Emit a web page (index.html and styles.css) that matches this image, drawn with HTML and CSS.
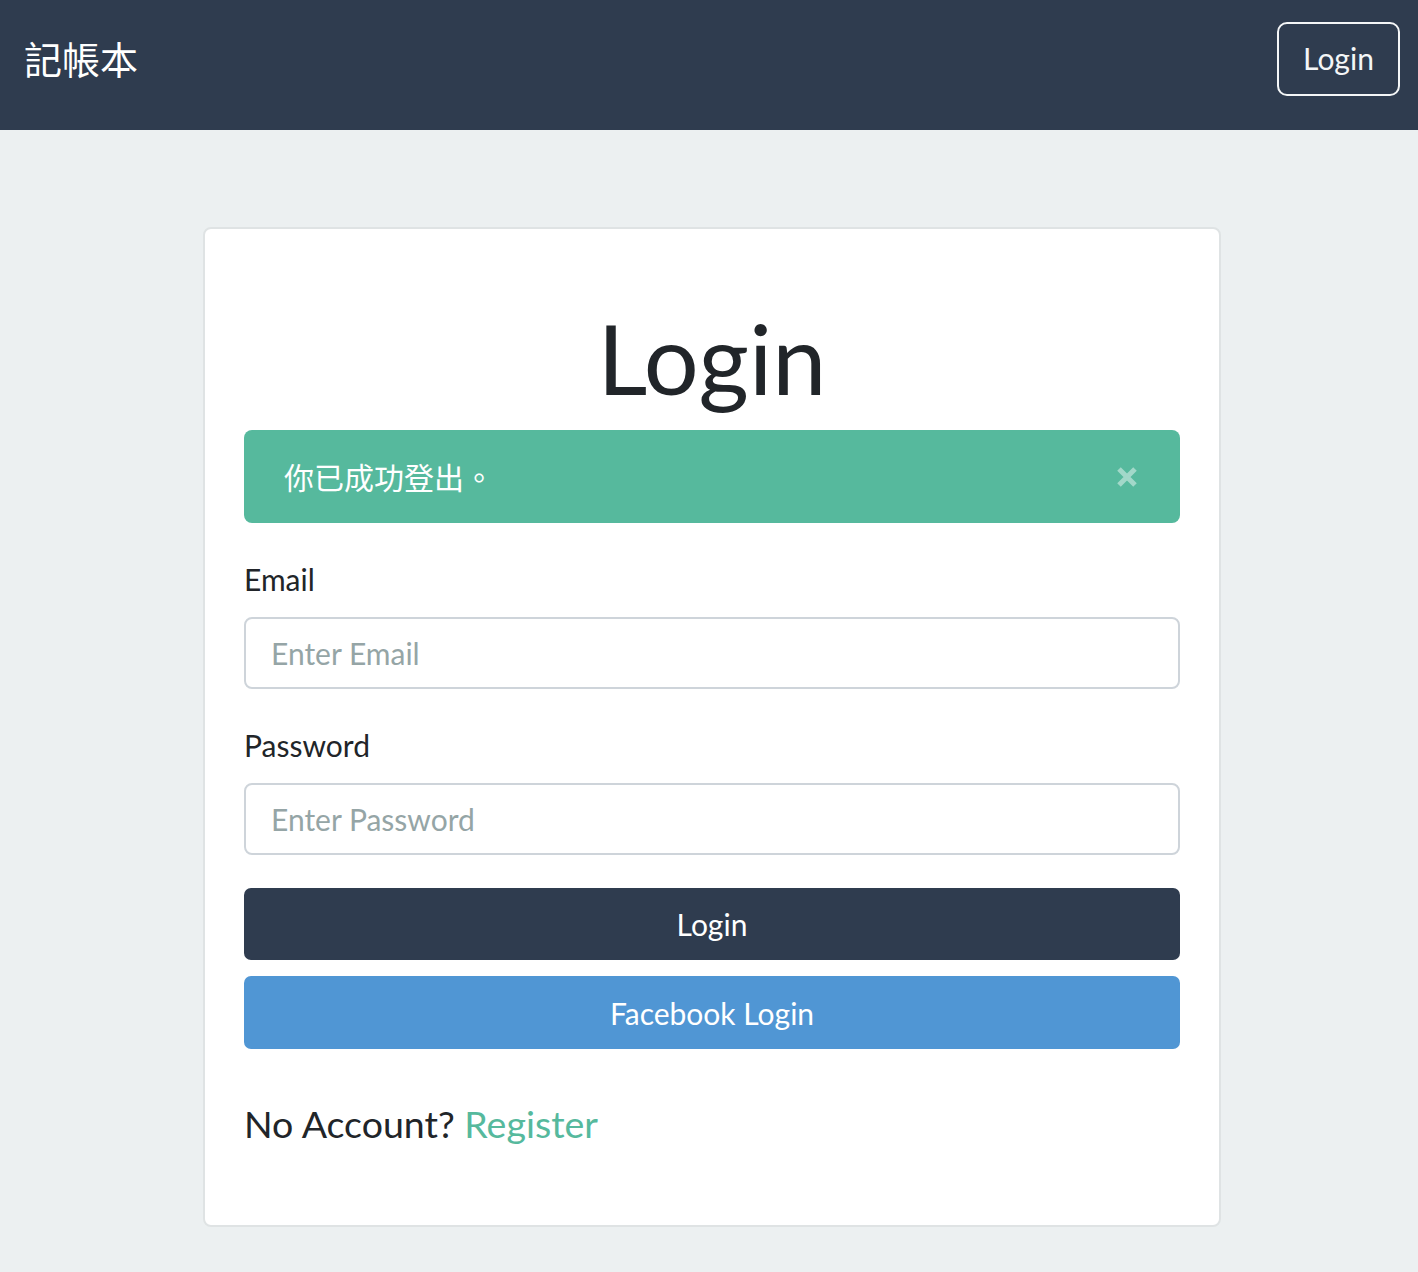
FILE: index.html
```html
<!DOCTYPE html>
<html lang="zh-Hant">
<head>
<meta charset="utf-8">
<title>記帳本</title>
<link rel="stylesheet" href="styles.css">
</head>
<body>
<nav class="navbar">
  <a class="brand" href="#">記帳本</a>
  <a class="nav-btn" href="#">Login</a>
</nav>
<main class="main">
  <section class="card">
    <h1 class="title">Login</h1>
    <div class="alert">
      <span class="alert-text">你已成功登出。</span>
      <button class="alert-close" aria-label="Close">
        <svg width="22" height="22" viewBox="0 0 22 22"><path d="M3 3 L19 19 M19 3 L3 19" stroke="currentColor" stroke-width="5" stroke-linecap="butt"/></svg>
      </button>
    </div>
    <form class="form">
      <label class="label" for="email">Email</label>
      <input class="input" id="email" type="email" placeholder="Enter Email">
      <label class="label" for="password">Password</label>
      <input class="input" id="password" type="password" placeholder="Enter Password">
      <button class="btn btn-dark" type="button">Login</button>
      <button class="btn btn-fb" type="button">Facebook Login</button>
    </form>
    <p class="register">No Account? <a href="#">Register</a></p>
  </section>
</main>
</body>
</html>
```

FILE: styles.css
```css
* { box-sizing: border-box; }
html, body { margin: 0; padding: 0; }
body {
  background: #ecf0f1;
  font-family: Lato, "Noto Sans CJK TC", sans-serif;
  color: #212529;
}
.navbar {
  height: 130px;
  background: #2f3c4f;
  display: flex;
  align-items: flex-start;
  justify-content: space-between;
  padding: 22px 18px 0 24px;
}
.brand {
  color: #fff;
  text-decoration: none;
  font-family: "Noto Sans CJK TC", sans-serif;
  font-size: 38px;
  line-height: 74px;
  margin-top: -1px;
}
.nav-btn {
  display: flex;
  align-items: center;
  justify-content: center;
  width: 123px;
  height: 74px;
  border: 2px solid #f4f6f7;
  border-radius: 10px;
  color: #f4f6f7;
  text-decoration: none;
  font-size: 30px;
  padding-bottom: 2px;
}
.main {
  padding: 97px 0 45px 6px;
}
.card {
  width: 1018px;
  margin: 0 auto;
  background: #fff;
  border: 2px solid #dfe3e4;
  border-radius: 8px;
  padding: 69px 39px 71px;
}
.title {
  margin: 0 0 12px;
  text-align: center;
  font-weight: 400;
  font-size: 97px;
  line-height: 120px;
  color: #212529;
}
.alert {
  height: 93px;
  background: #56b99d;
  border-radius: 8px;
  display: flex;
  align-items: center;
  justify-content: space-between;
  padding: 0 42px 0 40px;
  color: #fff;
}
.alert-text {
  font-family: "Noto Sans CJK TC", sans-serif;
  font-size: 30px;
  line-height: 45px;
}
.alert-close {
  background: none;
  border: 0;
  padding: 0;
  color: rgba(255, 255, 255, 0.45);
  display: flex;
  cursor: pointer;
}
.form {
  display: flex;
  flex-direction: column;
}
.label {
  font-size: 30px;
  line-height: 45px;
  margin: 34px 0 15px;
  color: #212529;
}
.input {
  height: 72px;
  border: 2px solid #ced4da;
  border-radius: 8px;
  padding: 0 25px;
  font-family: Lato, sans-serif;
  font-size: 30px;
  color: #212529;
  background: #fff;
}
.input::placeholder { color: #95a5a6; }
.btn {
  border: 0;
  border-radius: 7px;
  color: #fff;
  font-family: Lato, sans-serif;
  font-size: 30px;
  height: 72px;
  cursor: pointer;
}
.btn-dark { background: #2f3c4f; margin-top: 33px; }
.btn-fb { background: #5096d4; margin-top: 16px; height: 73px; }
.register {
  margin: 45px 0 0;
  font-size: 37.5px;
  line-height: 60px;
  color: #212529;
}
.register a { color: #56b99d; text-decoration: none; }
```
